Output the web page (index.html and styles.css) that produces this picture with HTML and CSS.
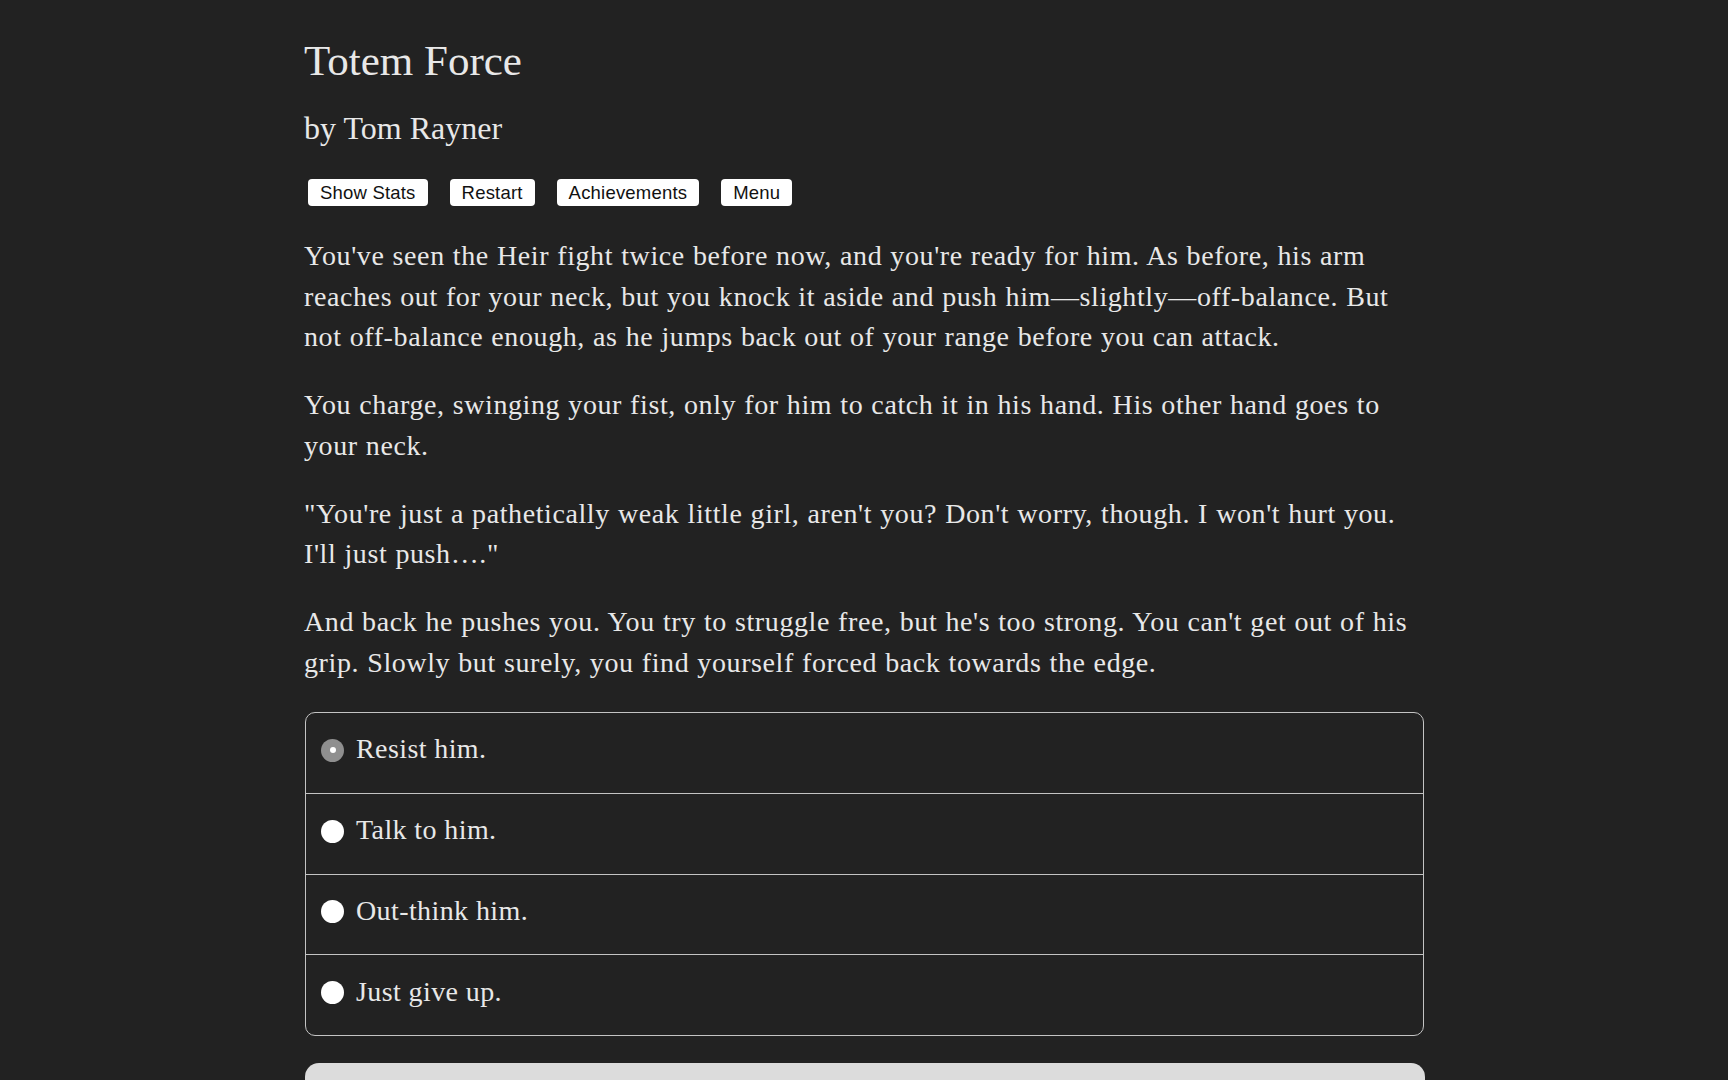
FILE: index.html
```html
<!DOCTYPE html>
<html lang="en">
<head>
<meta charset="utf-8">
<title>Totem Force</title>
<link rel="stylesheet" href="styles.css">
</head>
<body>
<main class="container">
  <h1 class="title">Totem Force</h1>
  <h2 class="author">by Tom Rayner</h2>
  <nav class="buttons">
    <button class="tool-btn">Show Stats</button>
    <button class="tool-btn">Restart</button>
    <button class="tool-btn">Achievements</button>
    <button class="tool-btn">Menu</button>
  </nav>
  <div class="story">
    <p>You've seen the Heir fight twice before now, and you're ready for him. As before, his arm reaches out for your neck, but you knock it aside and push him—slightly—off-balance. But not off-balance enough, as he jumps back out of your range before you can attack.</p>
    <p>You charge, swinging your fist, only for him to catch it in his hand. His other hand goes to your neck.</p>
    <p>"You're just a pathetically weak little girl, aren't you? Don't worry, though. I won't hurt you. I'll just push…."</p>
    <p>And back he pushes you. You try to struggle free, but he's too strong. You can't get out of his grip. Slowly but surely, you find yourself forced back towards the edge.</p>
  </div>
  <div class="choices">
    <label class="choice"><span class="radio checked"></span><span class="choice-text">Resist him.</span></label>
    <label class="choice"><span class="radio"></span><span class="choice-text">Talk to him.</span></label>
    <label class="choice"><span class="radio"></span><span class="choice-text">Out-think him.</span></label>
    <label class="choice"><span class="radio"></span><span class="choice-text">Just give up.</span></label>
  </div>
  <button class="next-btn" aria-label="Next"></button>
</main>
</body>
</html>
```

FILE: styles.css
```css
html, body {
  margin: 0;
  padding: 0;
  background: #222222;
}
body {
  color: #e8e8e8;
  font-family: "Liberation Serif", "Times New Roman", serif;
}
.container {
  width: 1120px;
  margin: 0 auto;
  padding-top: 36px;
}
.title {
  font-size: 43px;
  line-height: 50px;
  font-weight: normal;
  margin: 0;
}
.author {
  font-size: 32px;
  line-height: 36px;
  font-weight: normal;
  margin: 24px 0 0;
}
.buttons {
  display: flex;
  gap: 22px;
  padding-left: 4px;
  margin-top: 33px;
}
.tool-btn {
  font-family: "Liberation Sans", Arial, sans-serif;
  font-size: 18.5px;
  letter-spacing: 0.2px;
  height: 27px;
  padding: 0 12px;
  background: #ffffff;
  color: #111;
  border: none;
  border-radius: 4px;
  line-height: 27px;
}
.story {
  margin-top: 30px;
  font-size: 28px;
  line-height: 40.5px;
  letter-spacing: 0.6px;
  word-spacing: 0.5px;
}
.story p {
  margin: 0 0 27.5px;
}
.story p:last-child {
  margin-bottom: 0;
}
.choices {
  margin-top: 29px;
  border: 1px solid #c4c4c4;
  border-radius: 10px;
  margin-left: 1px;
}
.choice {
  display: flex;
  align-items: center;
  box-sizing: border-box;
  height: 79.75px;
  padding: 0 0 7px 15px;
  font-size: 28px;
  letter-spacing: 0.4px;
}
.choice + .choice {
  border-top: 1px solid #c4c4c4;
  height: 80.75px;
}
.radio {
  width: 23px;
  height: 23px;
  border-radius: 50%;
  background: #ffffff;
  margin-right: 12px;
  flex: none;
  position: relative;
  top: 1px;
}
.radio.checked {
  background: #8f8f8f;
}
.radio.checked::after {
  content: "";
  position: absolute;
  left: 8.5px;
  top: 8.5px;
  width: 6px;
  height: 6px;
  border-radius: 50%;
  background: #ffffff;
}
.next-btn {
  display: block;
  width: 1120px;
  margin: 27px 0 0 1px;
  height: 60px;
  border: none;
  border-radius: 14px;
  background: #dcdcdc;
}
```
